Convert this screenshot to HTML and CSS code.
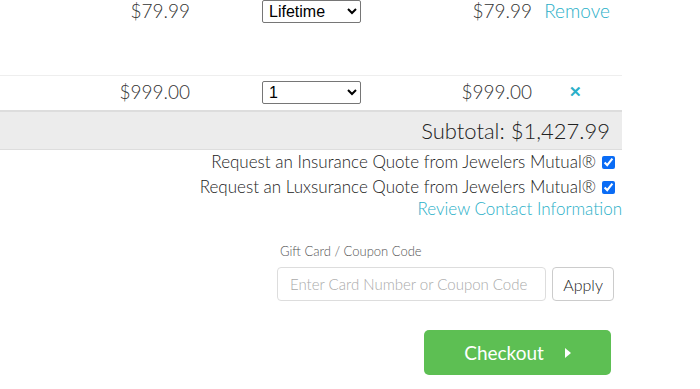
FILE: index.html
```html
<!DOCTYPE html>
<html lang="en">
<head>
  <meta charset="UTF-8">
  <title>Cart</title>
  <link rel="stylesheet" href="styles.css">
</head>
<body>
  <div class="cart">
    <div class="row first">
      <span class="price">$79.99</span>
      <select class="qty"><option>Lifetime</option></select>
      <span class="price total">$79.99</span>
      <a class="action" href="#">Remove</a>
    </div>
    <div class="row">
      <span class="price">$999.00</span>
      <select class="qty"><option>1</option></select>
      <span class="price total">$999.00</span>
      <a class="action remove-x" href="#">&#x2715;</a>
    </div>

    <div class="subtotal">Subtotal: $1,427.99</div>

    <div class="options">
      <label>Request an Insurance Quote from Jewelers Mutual® <input type="checkbox" checked></label>
      <label>Request an Luxsurance Quote from Jewelers Mutual® <input type="checkbox" checked></label>
      <a class="review" href="#">Review Contact Information</a>
    </div>

    <div class="coupon">
      <div class="coupon-label">Gift Card / Coupon Code</div>
      <div class="coupon-form">
        <input type="text" placeholder="Enter Card Number or Coupon Code">
        <button>Apply</button>
      </div>
    </div>

    <div class="checkout-wrap">
      <button class="checkout">Checkout <span class="arrow"></span></button>
    </div>
  </div>
</body>
</html>
```

FILE: styles.css
```css
body {
  margin: 0;
  font-family: Lato, "Open Sans", sans-serif;
  font-weight: 300;
  color: #222;
  background: #fff;
}
a {
  color: #2aafc8;
  text-decoration: none;
}
.cart {
  width: 622px;
}
.row {
  display: grid;
  grid-template-columns: 190px 72px 99px 171px 90px;
  align-items: center;
  height: 23px;
  padding: 5px 0 6px;
  border-top: 1px solid #eee;
}
.row.first {
  padding: 0;
  height: 75px;
  align-items: start;
  border-top: none;
}
.price {
  grid-column: 1;
  text-align: right;
  font-size: 19px;
  color: #333;
  line-height: 21px;
  margin-top: -3px;
}
.row.first .price,
.row.first .action {
  margin-top: 0;
}
.total {
  grid-column: 4;
}
.qty {
  grid-column: 3;
  width: 99px;
  height: 23px;
  font-family: "Liberation Sans", Arial, sans-serif;
  font-size: 16px;
  border: 1px solid #767676;
  border-radius: 2px;
  background: #fff;
  color: #000;
  padding: 0 2px;
}
.action {
  grid-column: 5;
  text-align: center;
  font-size: 19px;
  line-height: 21px;
  margin-top: -3px;
}
.remove-x {
  font-size: 15px;
  font-weight: bold;
  padding-right: 3px;
}
.subtotal {
  background: #ececec;
  border-top: 2px solid #ddd;
  border-bottom: 1px solid #ddd;
  height: 37px;
  line-height: 37px;
  text-align: right;
  padding-right: 12px;
  font-size: 22px;
  color: #222;
}
.options {
  display: flex;
  flex-direction: column;
  align-items: flex-end;
  margin-top: -1px;
}
.options label {
  font-size: 17px;
  line-height: 25px;
  color: #222;
  padding-right: 7px;
  display: flex;
  align-items: center;
  gap: 6px;
}
.options input {
  width: 13px;
  height: 13px;
  margin: 2px 0 0;
  accent-color: #0a6cf5;
}
.review {
  font-size: 17px;
  line-height: 22px;
  margin-top: -1px;
}
.coupon {
  margin: 22px 0 0 277px;
  width: 337px;
}
.coupon-label {
  font-size: 13px;
  color: #555;
  padding-left: 3px;
  line-height: 18px;
}
.coupon-form {
  display: flex;
  gap: 6px;
  margin-top: 7px;
}
.coupon-form input {
  width: 270px;
  height: 34px;
  box-sizing: border-box;
  border: 1px solid #ddd;
  border-radius: 4px;
  padding: 0 12px;
  font-family: Lato, sans-serif;
  font-weight: 300;
  font-size: 15px;
  color: #333;
}
.coupon-form input::placeholder {
  color: #aaa;
}
.coupon-form button {
  width: 62px;
  height: 34px;
  background: #fff;
  border: 1px solid #ccc;
  border-radius: 4px;
  font-family: Lato, sans-serif;
  font-weight: 300;
  font-size: 16px;
  color: #222;
}
.checkout-wrap {
  display: flex;
  justify-content: flex-end;
  padding-right: 11px;
  margin-top: 29px;
}
.checkout {
  width: 187px;
  height: 45px;
  background: #5dbf53;
  border: none;
  border-radius: 5px;
  color: #fff;
  font-family: Lato, sans-serif;
  font-size: 19px;
  padding-left: 6px;
}
.arrow {
  display: inline-block;
  width: 0;
  height: 0;
  border-top: 5px solid transparent;
  border-bottom: 5px solid transparent;
  border-left: 6px solid #fff;
  margin-left: 16px;
  vertical-align: 2px;
}
```
